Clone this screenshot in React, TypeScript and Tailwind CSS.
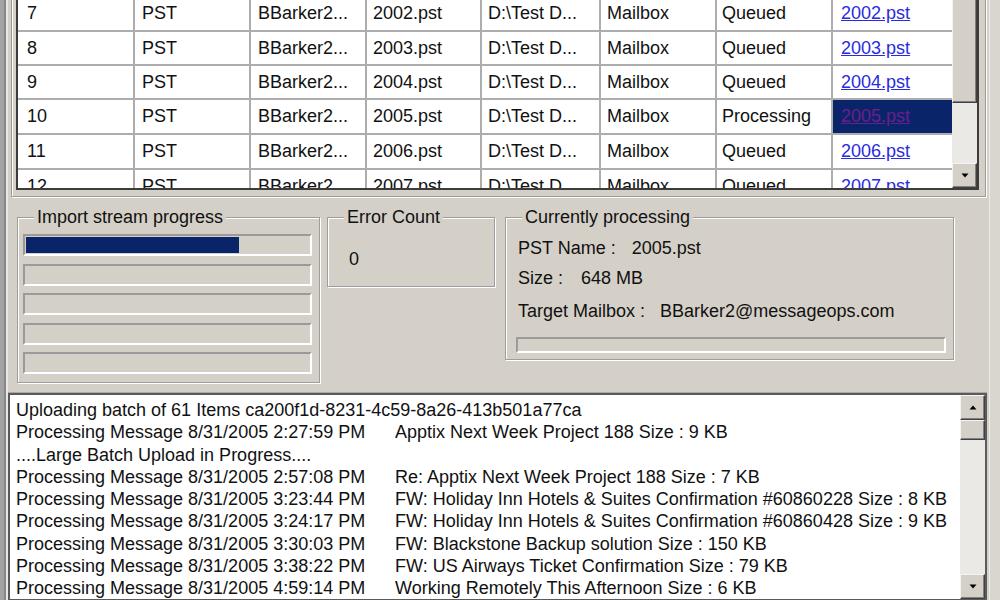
import clsx from "clsx";

type Row = { n: string; h: string; file: string; status: string; sel?: boolean };

const rows: Row[] = [
  { n: "7", h: "h-[36px]", file: "2002.pst", status: "Queued" },
  { n: "8", h: "h-[34px]", file: "2003.pst", status: "Queued" },
  { n: "9", h: "h-[34px]", file: "2004.pst", status: "Queued" },
  { n: "10", h: "h-[35px]", file: "2005.pst", status: "Processing", sel: true },
  { n: "11", h: "h-[35px]", file: "2006.pst", status: "Queued" },
  { n: "12", h: "h-[35px]", file: "2007.pst", status: "Queued" },
];

const log: [string, string?][] = [
  ["Uploading batch of 61 Items ca200f1d-8231-4c59-8a26-413b501a77ca"],
  ["Processing Message 8/31/2005 2:27:59 PM", "Apptix Next Week Project 188 Size : 9 KB"],
  ["....Large Batch Upload in Progress...."],
  ["Processing Message 8/31/2005 2:57:08 PM", "Re: Apptix Next Week Project 188 Size : 7 KB"],
  ["Processing Message 8/31/2005 3:23:44 PM", "FW: Holiday Inn Hotels & Suites Confirmation #60860228 Size : 8 KB"],
  ["Processing Message 8/31/2005 3:24:17 PM", "FW: Holiday Inn Hotels & Suites Confirmation #60860428 Size : 9 KB"],
  ["Processing Message 8/31/2005 3:30:03 PM", "FW: Blackstone Backup solution Size : 150 KB"],
  ["Processing Message 8/31/2005 3:38:22 PM", "FW: US Airways Ticket Confirmation Size : 79 KB"],
  ["Processing Message 8/31/2005 4:59:14 PM", "Working Remotely This Afternoon Size : 6 KB"],
];

const btn3d =
  "bg-[#d4d0c8] border border-t-[#f4f4f4] border-l-[#f4f4f4] border-r-[#404040] border-b-[#404040] shadow-[inset_-1px_-1px_0_#808080]";

function Arrow({ up }: { up?: boolean }) {
  return (
    <svg width="8" height="5" viewBox="0 0 8 5">
      <path d={up ? "M4 0.5 L7.5 4.5 L0.5 4.5Z" : "M0.5 0.5 L7.5 0.5 L4 4.5Z"} fill="#000" />
    </svg>
  );
}

function Cell({ children, className }: { children: React.ReactNode; className?: string }) {
  return (
    <div className={clsx("flex items-center whitespace-nowrap overflow-hidden", className)}>
      {children}
    </div>
  );
}

function Bar({ fill }: { fill?: boolean }) {
  return (
    <div className="h-[22px] border-2 border-t-[#9a9a9a] border-l-[#9a9a9a] border-b-white border-r-white p-[1px]">
      {fill && <div className="h-full w-[213px] bg-[#0a246a]" />}
    </div>
  );
}

function GroupBox({
  title,
  className,
  children,
}: {
  title: string;
  className?: string;
  children?: React.ReactNode;
}) {
  return (
    <fieldset
      className={clsx(
        "border border-[#9d9d9d] shadow-[inset_1px_1px_0_#fff,1px_1px_0_#fff]",
        className
      )}
    >
      <legend className="ml-[16px] px-[3px] leading-[22px] bg-[#d4d0c8]">{title}</legend>
      {children}
    </fieldset>
  );
}

export default function App() {
  return (
    <div className="w-[1000px] h-[600px] overflow-hidden bg-[#d4d0c8] flex text-[18px] text-[#111] font-['Liberation_Sans',Arial,sans-serif]">
      {/* window frame, left */}
      <div className="flex h-full">
        <div className="w-[4px] bg-[#a3a3a3]" />
        <div className="w-[2px] bg-[#868686]" />
        <div className="w-[2px] bg-[#e6e6e6]" />
      </div>

      <div className="w-[979px] flex flex-col">
        {/* queue table */}
        <div className="ml-[3px] mt-[-8px] w-[975px] pt-[2px] pl-[4px] pr-[6px] pb-[6px] border-l border-r border-b border-[#9a9a9a] shadow-[inset_1px_0_0_#fff,1px_1px_0_#fff]">
          <div className="w-[963px] h-[196px] border-2 border-[#3c3c3c] flex">
            <div className="w-[934px] h-full overflow-hidden bg-white">
              {rows.map((r) => (
                <div
                  key={r.n}
                  className={`grid grid-cols-[117px_116px_116px_115px_119px_116px_116px_119px] border-b-2 border-[#adadad] ${r.h}`}
                >
                  <Cell className="pl-[9px] border-r-2 border-[#adadad]">{r.n}</Cell>
                  <Cell className="pl-[7px] border-r-2 border-[#adadad]">PST</Cell>
                  <Cell className="pl-[7px] border-r-2 border-[#adadad]">BBarker2...</Cell>
                  <Cell className="pl-[6px] border-r-2 border-[#adadad]">{r.file}</Cell>
                  <Cell className="pl-[6px] border-r-2 border-[#adadad]">D:\Test D...</Cell>
                  <Cell className="pl-[6px] border-r-2 border-[#adadad]">Mailbox</Cell>
                  <Cell className="pl-[5px] border-r-2 border-[#adadad]">{r.status}</Cell>
                  <Cell
                    className={clsx(
                      "pl-[8px] underline",
                      r.sel ? "bg-[#0a246a] text-[#6a1f8c]" : "text-[#2a2ae0]"
                    )}
                  >
                    {r.file}
                  </Cell>
                </div>
              ))}
            </div>
            <div className="w-[25px] h-full flex flex-col">
              <div className={clsx("h-[107px]", btn3d)} />
              <div className="flex-1 bg-[#ebe9e5]" />
              <div className={clsx("h-[25px] flex items-center justify-center", btn3d)}>
                <Arrow />
              </div>
            </div>
          </div>
        </div>

        {/* status group boxes */}
        <div className="flex items-start mt-[9px] ml-[9px]">
          <GroupBox title="Import stream progress" className="w-[303px] h-[177px]">
            <div className="pt-[6px] pl-[5px] pr-[7px] flex flex-col gap-[7.5px]">
              <Bar fill />
              <Bar />
              <Bar />
              <Bar />
              <Bar />
            </div>
          </GroupBox>

          <GroupBox title="Error Count" className="ml-[7px] w-[168px] h-[81px]">
            <div className="pt-[20px] pl-[21px] leading-[22px]">0</div>
          </GroupBox>

          <GroupBox title="Currently processing" className="ml-[10px] w-[449px] h-[154px]">
            <div className="pt-[9px] pl-[12px] pr-[7px] leading-[22px]">
              <div>
                PST Name :<span className="ml-[16px]">2005.pst</span>
              </div>
              <div className="mt-[8px]">
                Size :<span className="ml-[18px]">648 MB</span>
              </div>
              <div className="mt-[11px]">
                Target Mailbox :<span className="ml-[15px]">BBarker2@messageops.com</span>
              </div>
              <div className="mt-[15px] ml-[-2px] h-[16px] border-2 border-t-[#9a9a9a] border-l-[#9a9a9a] border-b-white border-r-white" />
            </div>
          </GroupBox>
        </div>

        {/* log */}
        <div className="mt-[10px] w-[979px] h-[209px] border-2 border-[#5a5a5a] shadow-[0_-1px_0_#a8a8a8] flex bg-white">
          <div className="flex-1 pl-[6px] pt-[4px] overflow-hidden leading-[22.25px] whitespace-nowrap">
            {log.map(([a, b], i) => (
              <div key={i}>
                {b ? (
                  <>
                    <span className="inline-block w-[379px]">{a}</span>
                    <span>{b}</span>
                  </>
                ) : (
                  a
                )}
              </div>
            ))}
          </div>
          <div className="w-[25px] h-full flex flex-col">
            <div className={clsx("h-[25px] flex items-center justify-center", btn3d)}>
              <Arrow up />
            </div>
            <div className={clsx("h-[20px]", btn3d)} />
            <div className="flex-1 bg-[#ebe9e5]" />
            <div className={clsx("h-[25px] flex items-center justify-center", btn3d)}>
              <Arrow />
            </div>
          </div>
        </div>
      </div>

      {/* window frame, right */}
      <div className="flex-1 h-full flex">
        <div className="w-[2px] bg-[#d4d0c8]" />
        <div className="w-[1px] bg-[#ececec]" />
        <div className="flex-1 bg-[#d9d6d0]" />
      </div>
    </div>
  );
}
